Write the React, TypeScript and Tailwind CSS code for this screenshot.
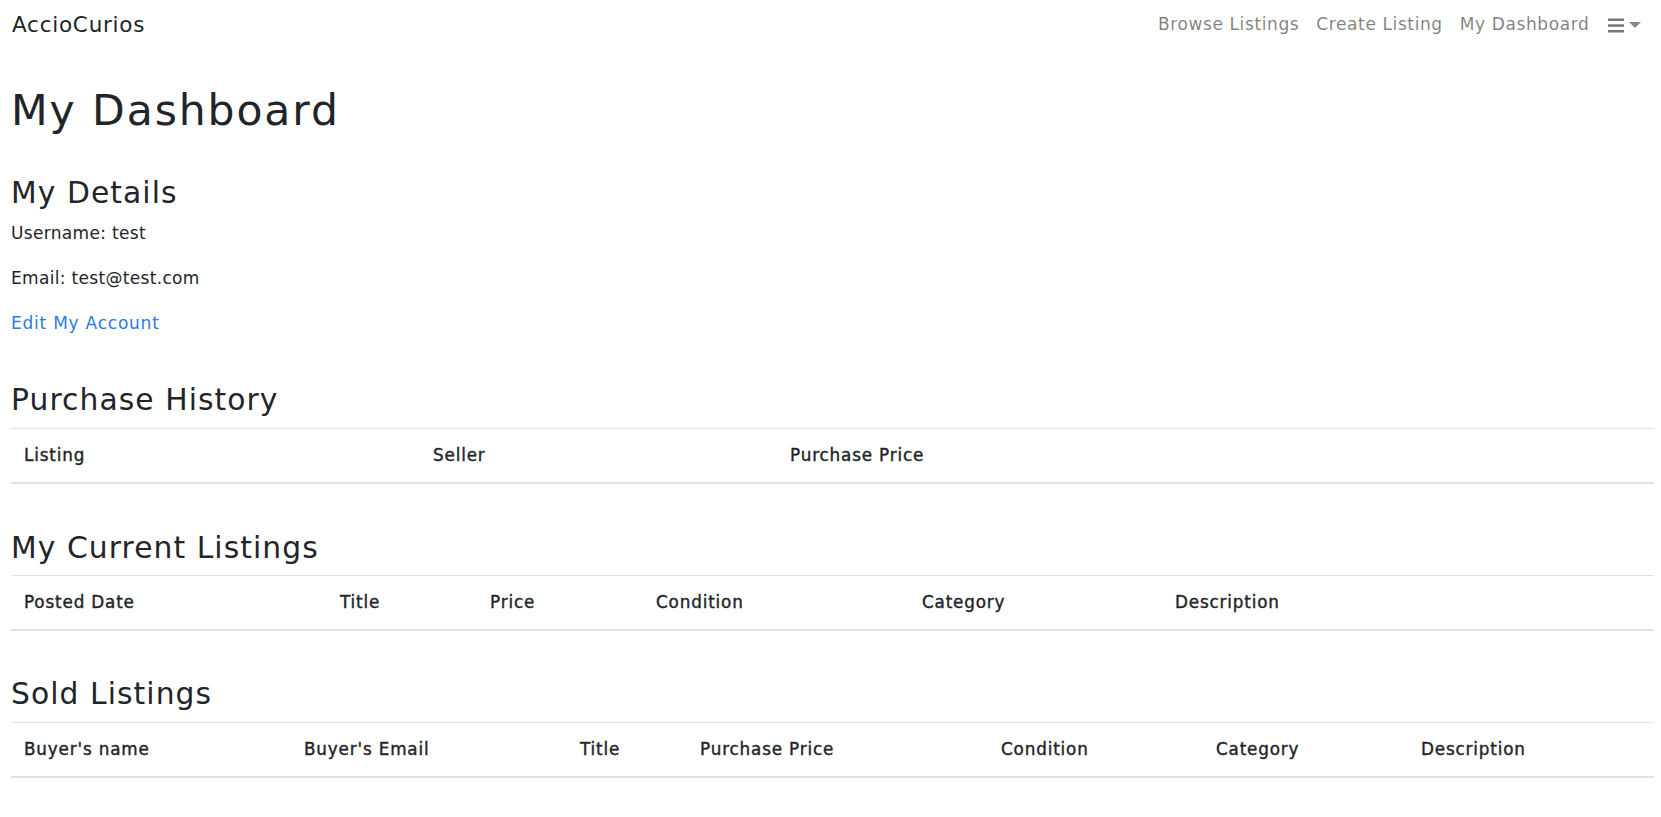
import React from "react";

type Col = { label: string; w: string };

const font = { fontFamily: '"DejaVu Sans", "Noto Sans", sans-serif' };

function DataTable({ cols, mt }: { cols: Col[]; mt: string }) {
  return (
    <table className={`${mt} w-full table-fixed border-separate border-spacing-0`}>
      <colgroup>
        {cols.map((c) => (
          <col key={c.label} className={c.w} />
        ))}
      </colgroup>
      <thead>
        <tr>
          {cols.map((c) => (
            <th
              key={c.label}
              className="h-[56px] border-t border-b-2 border-t-[#dee2e6] border-b-[#dee2e6] px-[13px] pt-[1px] pb-0 text-left align-middle text-[16.8px] font-normal tracking-[0.05em] text-[#212529] [-webkit-text-stroke:0.4px_#212529]"
            >
              {c.label}
            </th>
          ))}
        </tr>
      </thead>
    </table>
  );
}

export default function App() {
  return (
    <div className="min-h-screen bg-white tracking-[0.02em] text-[#212529]" style={font}>
      <nav className="flex h-[46px] items-center justify-between pt-[4px] pl-[12px] pr-[20px]">
        <a className="text-[21.5px] tracking-[0.035em] text-[#212529]">AccioCurios</a>
        <ul className="flex items-center text-[17px] tracking-[0.036em] text-black/50">
          <li className="px-[8.5px]">Browse Listings</li>
          <li className="px-[8.5px]">Create Listing</li>
          <li className="px-[8.5px]">My Dashboard</li>
          <li className="flex items-center pl-[10px]">
            <svg width="16" height="15" viewBox="0 0 16 15" className="text-[#777]">
              <rect x="0" y="0.5" width="16" height="2.5" fill="currentColor" />
              <rect x="0" y="6.3" width="16" height="2.5" fill="currentColor" />
              <rect x="0" y="12" width="16" height="2.5" fill="currentColor" />
            </svg>
            <span className="ml-[5px] inline-block h-0 w-0 border-x-[6px] border-t-[6px] border-x-transparent border-t-[#888]" />
          </li>
        </ul>
      </nav>

      <main className="pl-[11px] pr-[7px]">
        <h1 className="mt-[39px] text-[42.5px] leading-[51px] font-normal tracking-[0.045em]">My Dashboard</h1>

        <h3 className="mt-[39px] text-[29.75px] leading-[36px] font-normal tracking-[0.036em]">My Details</h3>
        <p className="mt-[9px] text-[17px] leading-[26px]">Username: test</p>
        <p className="mt-[19px] text-[17px] leading-[26px]">Email: test@test.com</p>
        <p className="mt-[19px] text-[17px] leading-[26px]">
          <a className="tracking-[0.045em] text-[#2d7ae0]">Edit My Account</a>
        </p>

        <h3 className="mt-[46px] text-[29.75px] leading-[36px] font-normal tracking-[0.036em]">Purchase History</h3>
        <DataTable
          mt="mt-[10px]"
          cols={[
            { label: "Listing", w: "w-[409px]" },
            { label: "Seller", w: "w-[357px]" },
            { label: "Purchase Price", w: "w-auto" },
          ]}
        />

        <h3 className="mt-[46px] text-[29.75px] leading-[36px] font-normal tracking-[0.036em]">My Current Listings</h3>
        <DataTable
          mt="mt-[9px]"
          cols={[
            { label: "Posted Date", w: "w-[316px]" },
            { label: "Title", w: "w-[150px]" },
            { label: "Price", w: "w-[166px]" },
            { label: "Condition", w: "w-[266px]" },
            { label: "Category", w: "w-[253px]" },
            { label: "Description", w: "w-auto" },
          ]}
        />

        <h3 className="mt-[45px] text-[29.75px] leading-[36px] font-normal tracking-[0.036em]">Sold Listings</h3>
        <DataTable
          mt="mt-[10px]"
          cols={[
            { label: "Buyer's name", w: "w-[280px]" },
            { label: "Buyer's Email", w: "w-[276px]" },
            { label: "Title", w: "w-[120px]" },
            { label: "Purchase Price", w: "w-[301px]" },
            { label: "Condition", w: "w-[215px]" },
            { label: "Category", w: "w-[205px]" },
            { label: "Description", w: "w-auto" },
          ]}
        />
      </main>
    </div>
  );
}
